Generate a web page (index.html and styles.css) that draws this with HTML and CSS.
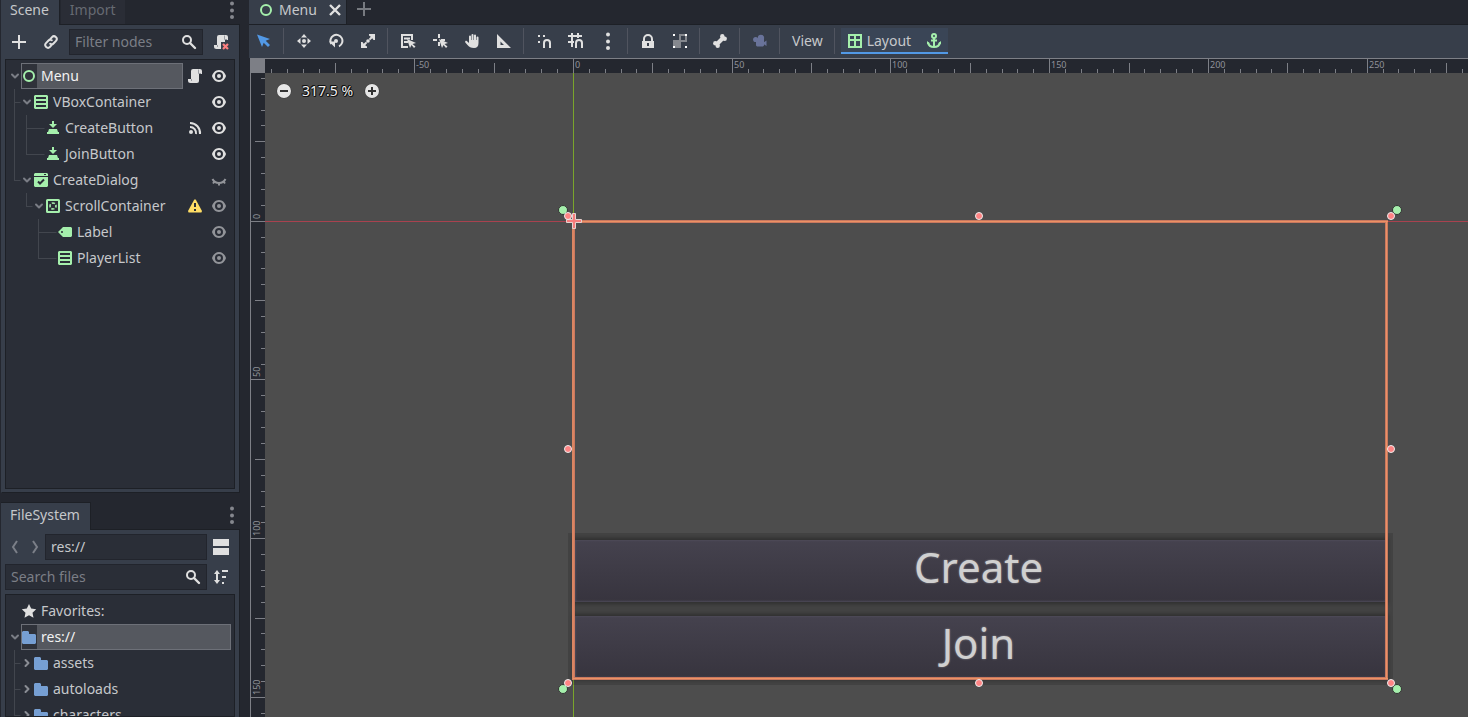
FILE: index.html
```
<!DOCTYPE html>
<html lang="en">
<head>
<meta charset="utf-8">
<title>Menu - Scene Editor</title>
<link rel="stylesheet" href="styles.css">
</head>
<body>
<svg class="sprite" aria-hidden="true">
  <symbol id="i-arrow-down" viewBox="0 0 12 12"><path d="M3 4.5 6 7.5 9 4.5" fill="none" stroke="#7a7d85" stroke-width="2" stroke-linecap="round" stroke-linejoin="round"/></symbol>
  <symbol id="i-arrow-right" viewBox="0 0 12 12"><path d="M4.5 3 7.5 6 4.5 9" fill="none" stroke="#8a8d94" stroke-width="2" stroke-linecap="round" stroke-linejoin="round"/></symbol>
  <symbol id="i-eye" viewBox="0 0 16 16"><path fill-rule="evenodd" d="M8 2C4.4 2 2 4.800 1 8c1 3.200 3.400 6 7 6s6-2.800 7-6c-1-3.200-3.400-6-7-6zm0 2a4 4 0 1 1 0 8 4 4 0 0 1 0-8zm0 2a2 2 0 1 0 0 4 2 2 0 0 0 0-4z"/></symbol>
  <symbol id="i-eye-closed" viewBox="0 0 16 16"><path d="M1.500 7C3 10 5.500 11 8 11s5-1 6.500-4M3.500 9.500 2 11.500M8 11v2.500M12.500 9.500l1.500 2" fill="none" stroke="currentColor" stroke-width="2"/></symbol>
  <symbol id="i-ring" viewBox="0 0 16 16"><circle cx="8" cy="8" r="5" fill="none" stroke="#a5efac" stroke-width="2"/></symbol>
  <symbol id="i-vbox" viewBox="0 0 16 16"><path fill="#a5efac" fill-rule="evenodd" d="M2 1h12l1 1v12l-1 1H2l-1-1V2zM3 3v2h10V3zM3 7v2h10V7zM3 11v2h10v-2z"/></symbol>
  <symbol id="i-button" viewBox="0 0 16 16"><path fill="#a5efac" d="M7 1h2v3h3L8 8 4 4h3zM4 9h8l1 3h1v2H2v-2h1z"/></symbol>
  <symbol id="i-dialog" viewBox="0 0 16 16"><path fill="#a5efac" d="M2 1h12l1 1v2H1V2zM1 5h14v9l-1 1H2l-1-1z"/><path d="M11 2h2v1h-2z" fill="#2a2e37"/><path d="m5 9.500 2 2 4-4" fill="none" stroke="#2a2e37" stroke-width="2"/></symbol>
  <symbol id="i-scroll" viewBox="0 0 16 16"><rect x="2" y="2" width="12" height="12" rx=".5" fill="none" stroke="#a5efac" stroke-width="2"/><circle cx="8" cy="8" r="3" fill="none" stroke="#a5efac" stroke-width="1.600" stroke-dasharray="3.200 1.510" stroke-dashoffset="1.600"/></symbol>
  <symbol id="i-label" viewBox="0 0 16 16"><path fill="#a5efac" fill-rule="evenodd" d="M6 3h8l1 1v8l-1 1H6L1 8zM5 7a1 1 0 1 0 0 2 1 1 0 0 0 0-2z"/></symbol>
  <symbol id="i-script" viewBox="0 0 16 16"><path fill="#e0e0e0" d="M6 1a2 2 0 0 0-2 2v8H1v1.500A2.500 2.500 0 0 0 3.500 15H10a2 2 0 0 0 2-2V6h3V3a2 2 0 0 0-2-2z"/><path d="M11.500 1.500V5.500H14M4.500 11v2" fill="none" stroke="#9a9ca2" stroke-width="1"/></symbol>
  <symbol id="i-signal" viewBox="0 0 16 16"><circle cx="4" cy="12" r="2" fill="#e0e0e0"/><path d="M3 3a10 10 0 0 1 10 11M3 7a6 6 0 0 1 6 7" fill="none" stroke="#e0e0e0" stroke-width="2"/></symbol>
  <symbol id="i-warning" viewBox="0 0 16 16"><path fill="#ffdd65" d="M7.300 1.500h1.400L15 13l-.6 1.500H1.600L1 13z"/><path d="M7 5h2v4H7zM7 11h2v2H7z" fill="#2a2e37"/></symbol>
  <symbol id="i-search" viewBox="0 0 16 16"><circle cx="6" cy="6" r="4" fill="none" stroke="#e0e0e0" stroke-width="2"/><path d="m9 9 5 5" stroke="#e0e0e0" stroke-width="2.400" stroke-linecap="round"/></symbol>
  <symbol id="i-plus" viewBox="0 0 16 16"><path d="M8 1v14M1 8h14" stroke="currentColor" stroke-width="2"/></symbol>
  <symbol id="i-close" viewBox="0 0 16 16"><path d="m3 3 10 10M13 3 3 13" stroke="#e0e0e0" stroke-width="2.400"/></symbol>
  <symbol id="i-link" viewBox="0 0 16 16"><path d="M7 5.500 9 3.200a2.600 2.600 0 0 1 4 3.600L10.500 9.500A2.500 2.500 0 0 1 7.200 9.800M9 10.500 7 12.800a2.600 2.600 0 0 1-4-3.600L5.500 6.500A2.500 2.500 0 0 1 8.800 6.200" fill="none" stroke="#e0e0e0" stroke-width="2" stroke-linecap="round"/></symbol>
  <symbol id="i-script-remove" viewBox="0 0 16 16"><path fill="#e0e0e0" d="M6 1a2 2 0 0 0-2 2v8H1v1.500A2.500 2.500 0 0 0 3.500 15H8V8h4V6h3V3a2 2 0 0 0-2-2z"/><path d="M11.500 1.500V5.500H14M4.500 11v2" fill="none" stroke="#9a9ca2"/><path d="m10 10 5 5M15 10l-5 5" stroke="#fc7f7f" stroke-width="2.200"/></symbol>
  <symbol id="i-dots" viewBox="0 0 16 18"><circle cx="8" cy="2.500" r="2"/><circle cx="8" cy="9.500" r="2"/><circle cx="8" cy="16" r="2"/></symbol>
  <symbol id="i-select" viewBox="0 0 16 16"><path fill="#5299e6" d="m1 1.500 5 12.500 1.700-4.200 4.300 4.200 2-2-4.300-4.200L14 6z"/></symbol>
  <symbol id="i-move" viewBox="0 0 16 16"><path fill="#e0e0e0" d="m8 1 3 3.500H5zM8 15l-3-3.500h6zM1 8l3.500-3v6zM15 8l-3.500 3V5z"/><circle cx="8" cy="8" r="2" fill="#e0e0e0"/></symbol>
  <symbol id="i-rotate" viewBox="0 0 16 16"><path d="M3.300 11A6 6 0 1 1 11 13.300" fill="none" stroke="#e0e0e0" stroke-width="2"/><path d="M1 8.500h6v6z" fill="#e0e0e0"/><circle cx="8" cy="8" r="2" fill="#e0e0e0"/></symbol>
  <symbol id="i-scale" viewBox="0 0 16 16"><path d="M9 1h6v6h-1.500l-1.200-1.800-2.200 2-1.300-1.300 2-2.200L9 2.500zM7 15H1V9h1.500l1.200 1.800 2.200-2 1.300 1.300-2 2.200L7 13.500z" fill="#e0e0e0"/><circle cx="8" cy="8" r="1.800" fill="#e0e0e0"/></symbol>
  <symbol id="i-list" viewBox="0 0 16 16"><path d="M2 1v13h6M2 2h10v5M4 5.500h6M4 9h4" fill="none" stroke="#e0e0e0" stroke-width="2"/><path d="m7 6 3 9 1.500-3 2.500 3 1.500-1.500-3-2.500L16 10z" fill="#e0e0e0"/></symbol>
  <symbol id="i-pivot" viewBox="0 0 16 16"><path d="M7 1v4M1 7h4M9 7h4M7 9v4" stroke="#e0e0e0" stroke-width="2"/><path d="m7 6 3 9 1.500-3 2.500 3 1.500-1.500-3-2.500L16 10z" fill="#e0e0e0"/></symbol>
  <symbol id="i-hand" viewBox="0 0 16 16"><path fill="#e0e0e0" d="M5 10V3.500a1 1 0 0 1 2 0V7h.5V2a1 1 0 0 1 2 0v5h.5V2.500a1 1 0 0 1 2 0V7h.5V4.500a1 1 0 0 1 2 0V10c0 3.500-1.500 5-4.500 5C7 15 5 14 3.500 12L1.300 9.500c-.6-1.300.6-2 1.500-1.500z"/></symbol>
  <symbol id="i-ruler" viewBox="0 0 16 16"><path fill="#e0e0e0" fill-rule="evenodd" d="M1 1v14h14zM4.500 8.500 8 12H4.500z"/></symbol>
  <symbol id="i-snap" viewBox="0 0 16 16"><path fill="#e0e0e0" d="M2 2h2v2H2zM7 2h2v2H7zM2 8h2v2H2zM7 13h2v2H7zM13 13h2v2h-2z"/><path d="M8 13v-3a3 3 0 0 1 6 0v3" fill="none" stroke="#e0e0e0" stroke-width="2"/></symbol>
  <symbol id="i-snap-grid" viewBox="0 0 16 16"><path d="M4 0v14M10 0v5M0 3h14M0 9h6" stroke="#e0e0e0" stroke-width="2"/><path d="M8 15v-5a3 3 0 0 1 6 0v5" fill="none" stroke="#e0e0e0" stroke-width="2"/></symbol>
  <symbol id="i-lock" viewBox="0 0 16 16"><path d="M4 8V6a4 4 0 0 1 8 0v2" fill="none" stroke="#e0e0e0" stroke-width="2"/><path fill="#e0e0e0" fill-rule="evenodd" d="M2 8h12v7H2zM7 10v3h2v-3z"/></symbol>
  <symbol id="i-group" viewBox="0 0 16 16"><path fill="#85888e" fill-rule="evenodd" d="M7 1h8v8H9v6H1V7h6zM9 3v4h4V3z"/><path fill="#fff" d="M1 1h2v2H1zM13 1h2v2h-2zM1 13h2v2H1zM13 13h2v2h-2z"/></symbol>
  <symbol id="i-bone" viewBox="0 0 16 16"><path d="M5 11 11 5" stroke="#e0e0e0" stroke-width="4"/><circle cx="3.300" cy="10.300" r="2.200" fill="#e0e0e0"/><circle cx="5.700" cy="12.700" r="2.200" fill="#e0e0e0"/><circle cx="10.300" cy="3.300" r="2.200" fill="#e0e0e0"/><circle cx="12.700" cy="5.700" r="2.200" fill="#e0e0e0"/></symbol>
  <symbol id="i-camera" viewBox="0 0 16 16"><g fill="#69739a"><circle cx="9" cy="5" r="3.200"/><circle cx="3.700" cy="6.500" r="2.600"/><path d="M4 6h8v6.500l-1 1H5l-1-1zM11.500 9.500 14.500 7.500v5.500l-3-2z"/></g></symbol>
  <symbol id="i-grid" viewBox="0 0 16 16"><path d="M2 2h12v12H2zM2 7h12M8 2v12" fill="none" stroke="#a5efac" stroke-width="2"/></symbol>
  <symbol id="i-anchor" viewBox="0 0 16 16"><circle cx="8" cy="3" r="2" fill="none" stroke="#a5efac" stroke-width="2"/><path d="M8 5v9M5 7.500h6M2 9.500c.5 3 3 4.500 6 4.500s5.500-1.500 6-4.500" fill="none" stroke="#a5efac" stroke-width="2"/><path d="M1 11V8l3 2.500zM15 11V8l-3 2.500z" fill="#a5efac"/></symbol>
  <symbol id="i-minus-disc" viewBox="0 0 16 16"><circle cx="8" cy="8" r="7.500" fill="#3a3a3a"/><circle cx="8" cy="8" r="7" fill="#e6e6e6"/><path d="M4 8h8" stroke="#333" stroke-width="2"/></symbol>
  <symbol id="i-plus-disc" viewBox="0 0 16 16"><circle cx="8" cy="8" r="7.500" fill="#3a3a3a"/><circle cx="8" cy="8" r="7" fill="#e6e6e6"/><path d="M4 8h8M8 4v8" stroke="#333" stroke-width="2"/></symbol>
  <symbol id="i-back" viewBox="0 0 10 16"><path d="M7 2 3 8l4 6" fill="none" stroke="#7b7f88" stroke-width="2"/></symbol>
  <symbol id="i-forward" viewBox="0 0 10 16"><path d="m3 2 4 6-4 6" fill="none" stroke="#7b7f88" stroke-width="2"/></symbol>
  <symbol id="i-split" viewBox="0 0 16 16"><path fill="#e0e0e0" d="M0 0h16v7H0zM0 9h16v7H0z"/></symbol>
  <symbol id="i-sort" viewBox="0 0 16 16"><path fill="#e0e0e0" d="m4 1 3 4H5v6h2l-3 4-3-4h2V5H1zM9 1h6v2H9zM9 7h4v2H9zM9 13h2v2H9z"/></symbol>
  <symbol id="i-star" viewBox="0 0 16 16"><path fill="#e0e0e0" d="m8 1 2.200 4.600 5 .6-3.700 3.500 1 5L8 12.200 3.500 14.700l1-5L.800 6.200l5-.6z"/></symbol>
  <symbol id="i-folder" viewBox="0 0 16 16"><path fill="#769fd3" d="M2 2h5l1 1v2h6l1 1v8l-1 1H2l-1-1V3z"/></symbol>
</svg>

<div class="editor">
  <aside class="docks">
    <section class="dock dock-scene">
      <div class="tabs">
        <button class="tab tab-active">Scene</button>
        <button class="tab tab-idle">Import</button>
        <button class="tab-menu" aria-label="Dock options"><svg class="icon-dots"><use href="#i-dots"/></svg></button>
      </div>
      <div class="panel">
        <div class="tools">
          <button class="tool" aria-label="Add node"><svg class="icon"><use href="#i-plus"/></svg></button>
          <button class="tool" aria-label="Instance scene"><svg class="icon"><use href="#i-link"/></svg></button>
          <label class="field"><input class="field-input" type="text" placeholder="Filter nodes" aria-label="Filter nodes"><svg class="icon"><use href="#i-search"/></svg></label>
          <button class="tool" aria-label="Detach script"><svg class="icon"><use href="#i-script-remove"/></svg></button>
        </div>
        <div class="tree">
          <svg class="guides"><path d="M8.500 29v92M8.500 42.500h6M8.500 120.500h6M20.500 55v40M20.500 68.500h18M20.500 94.500h18M20.500 133v14M20.500 146.500h6M32.500 159v40M32.500 172.500h18M32.500 198.500h18"/></svg>
          <div class="row"><svg class="arrow"><use href="#i-arrow-down"/></svg><span class="cell cell-selected"><svg class="node"><use href="#i-ring"/></svg>Menu</span><button class="mark" aria-label="Open script"><svg class="icon"><use href="#i-script"/></svg></button><button class="mark" aria-label="Toggle visibility"><svg class="icon"><use href="#i-eye"/></svg></button></div>
          <div class="row level-1"><svg class="arrow"><use href="#i-arrow-down"/></svg><span class="cell"><svg class="node"><use href="#i-vbox"/></svg>VBoxContainer</span><button class="mark" aria-label="Toggle visibility"><svg class="icon"><use href="#i-eye"/></svg></button></div>
          <div class="row level-2"><span class="arrow"></span><span class="cell"><svg class="node"><use href="#i-button"/></svg>CreateButton</span><button class="mark" aria-label="Signals"><svg class="icon"><use href="#i-signal"/></svg></button><button class="mark" aria-label="Toggle visibility"><svg class="icon"><use href="#i-eye"/></svg></button></div>
          <div class="row level-2"><span class="arrow"></span><span class="cell"><svg class="node"><use href="#i-button"/></svg>JoinButton</span><button class="mark" aria-label="Toggle visibility"><svg class="icon"><use href="#i-eye"/></svg></button></div>
          <div class="row level-1"><svg class="arrow"><use href="#i-arrow-down"/></svg><span class="cell"><svg class="node"><use href="#i-dialog"/></svg>CreateDialog</span><button class="mark mark-dim" aria-label="Toggle visibility"><svg class="icon"><use href="#i-eye-closed"/></svg></button></div>
          <div class="row level-2"><svg class="arrow"><use href="#i-arrow-down"/></svg><span class="cell"><svg class="node"><use href="#i-scroll"/></svg>ScrollContainer</span><button class="mark" aria-label="Warning"><svg class="icon"><use href="#i-warning"/></svg></button><button class="mark mark-dim" aria-label="Toggle visibility"><svg class="icon"><use href="#i-eye"/></svg></button></div>
          <div class="row level-3"><span class="arrow"></span><span class="cell"><svg class="node"><use href="#i-label"/></svg>Label</span><button class="mark mark-dim" aria-label="Toggle visibility"><svg class="icon"><use href="#i-eye"/></svg></button></div>
          <div class="row level-3"><span class="arrow"></span><span class="cell"><svg class="node"><use href="#i-vbox"/></svg>PlayerList</span><button class="mark mark-dim" aria-label="Toggle visibility"><svg class="icon"><use href="#i-eye"/></svg></button></div>
        </div>
      </div>
    </section>

    <section class="dock dock-files">
      <div class="tabs">
        <button class="tab tab-active">FileSystem</button>
        <button class="tab-menu" aria-label="Dock options"><svg class="icon-dots"><use href="#i-dots"/></svg></button>
      </div>
      <div class="panel">
        <div class="file-tools">
          <div class="path">
            <button class="step" aria-label="Back"><svg class="icon-step"><use href="#i-back"/></svg></button>
            <button class="step" aria-label="Forward"><svg class="icon-step"><use href="#i-forward"/></svg></button>
            <label class="field"><input class="field-input" type="text" value="res://" aria-label="Path"></label>
          </div>
          <button class="tool" aria-label="Split mode"><svg class="icon"><use href="#i-split"/></svg></button>
          <label class="field"><input class="field-input" type="text" placeholder="Search files" aria-label="Search files"><svg class="icon"><use href="#i-search"/></svg></label>
          <button class="tool" aria-label="Sort files"><svg class="icon"><use href="#i-sort"/></svg></button>
        </div>
        <div class="tree">
          <svg class="guides"><path d="M8.500 55v120M8.500 68.500h6M8.500 94.500h6M8.500 120.500h6"/></svg>
          <div class="row"><span class="arrow"></span><span class="cell"><svg class="node"><use href="#i-star"/></svg>Favorites:</span></div>
          <div class="row"><svg class="arrow"><use href="#i-arrow-down"/></svg><span class="cell cell-selected"><svg class="node"><use href="#i-folder"/></svg>res://</span></div>
          <div class="row level-1"><svg class="arrow"><use href="#i-arrow-right"/></svg><span class="cell"><svg class="node"><use href="#i-folder"/></svg>assets</span></div>
          <div class="row level-1"><svg class="arrow"><use href="#i-arrow-right"/></svg><span class="cell"><svg class="node"><use href="#i-folder"/></svg>autoloads</span></div>
          <div class="row level-1"><svg class="arrow"><use href="#i-arrow-right"/></svg><span class="cell"><svg class="node"><use href="#i-folder"/></svg>characters</span></div>
        </div>
      </div>
    </section>
  </aside>

  <main class="main">
    <div class="scene-tabs">
      <div class="scene-tab"><svg class="icon"><use href="#i-ring"/></svg><span class="scene-name">Menu</span><button class="plain" aria-label="Close scene"><svg class="icon"><use href="#i-close"/></svg></button></div>
      <button class="plain add-scene" aria-label="Add scene"><svg class="icon"><use href="#i-plus"/></svg></button>
    </div>
    <div class="toolbar">
      <button class="tool" aria-label="Select"><svg class="icon"><use href="#i-select"/></svg></button>
      <span class="separator"></span>
      <button class="tool" aria-label="Move"><svg class="icon"><use href="#i-move"/></svg></button>
      <button class="tool" aria-label="Rotate"><svg class="icon"><use href="#i-rotate"/></svg></button>
      <button class="tool" aria-label="Scale"><svg class="icon"><use href="#i-scale"/></svg></button>
      <span class="separator"></span>
      <button class="tool" aria-label="List select"><svg class="icon"><use href="#i-list"/></svg></button>
      <button class="tool" aria-label="Pivot"><svg class="icon"><use href="#i-pivot"/></svg></button>
      <button class="tool" aria-label="Pan"><svg class="icon"><use href="#i-hand"/></svg></button>
      <button class="tool" aria-label="Ruler"><svg class="icon"><use href="#i-ruler"/></svg></button>
      <span class="separator"></span>
      <button class="tool" aria-label="Smart snap"><svg class="icon"><use href="#i-snap"/></svg></button>
      <button class="tool" aria-label="Grid snap"><svg class="icon"><use href="#i-snap-grid"/></svg></button>
      <button class="tool" aria-label="Snap options"><svg class="icon-dots"><use href="#i-dots"/></svg></button>
      <span class="separator"></span>
      <button class="tool" aria-label="Lock"><svg class="icon"><use href="#i-lock"/></svg></button>
      <button class="tool" aria-label="Group"><svg class="icon"><use href="#i-group"/></svg></button>
      <span class="separator"></span>
      <button class="tool" aria-label="Skeleton"><svg class="icon"><use href="#i-bone"/></svg></button>
      <span class="separator"></span>
      <button class="tool" aria-label="Camera override"><svg class="icon"><use href="#i-camera"/></svg></button>
      <span class="separator"></span>
      <button class="text-tool">View</button>
      <span class="separator"></span>
      <div class="layout-group">
        <button class="text-tool"><svg class="icon"><use href="#i-grid"/></svg>Layout</button>
        <button class="tool" aria-label="Anchors"><svg class="icon"><use href="#i-anchor"/></svg></button>
      </div>
    </div>
    <div class="canvas">
      <div class="corner"></div>
      <svg class="ruler ruler-x"></svg>
      <svg class="ruler ruler-y"></svg>
      <div class="viewport">
        <svg class="overlay"><path d="M308.500 0v2000" stroke="#7aa52b"/><path d="M0 148.500h4000" stroke="#a8424f"/></svg>
        <div class="frame">
          <button class="game-button"><span class="game-text">Create</span></button>
          <button class="game-button"><span class="game-text">Join</span></button>
        </div>
        <svg class="overlay">
          <g fill="none"><rect x="308.500" y="148.500" width="813" height="457" stroke="#c97860" stroke-width="3"/><path d="M308 607V148.500h815M1121.500 148v458M308 605.500h815" stroke="#ec9264"/></g>
          <path d="M307.500 140.500h3v6h6v3h-6v6h-3v-6h-6v-3h6z" fill="#f77c7c" stroke="#e6d2cf"/>
          <g class="anchors"><circle cx="298" cy="137" r="4.500"/><circle cx="1132" cy="137" r="4.500"/><circle cx="298" cy="616" r="4.500"/><circle cx="1132" cy="616" r="4.500"/></g>
          <g class="handles"><circle cx="303" cy="143" r="3.500"/><circle cx="714" cy="143" r="3.500"/><circle cx="1126" cy="143" r="3.500"/><circle cx="303" cy="376" r="3.500"/><circle cx="1126" cy="376" r="3.500"/><circle cx="303" cy="610" r="3.500"/><circle cx="714" cy="610" r="3.500"/><circle cx="1126" cy="610" r="3.500"/></g>
        </svg>
        <div class="zoom">
          <button class="plain" aria-label="Zoom out"><svg class="icon"><use href="#i-minus-disc"/></svg></button>
          <span class="zoom-value">317.5 %</span>
          <button class="plain" aria-label="Zoom in"><svg class="icon"><use href="#i-plus-disc"/></svg></button>
        </div>
      </div>
    </div>
  </main>
</div>
<script src="rulers.js"></script>
</body>
</html>
```
FILE: styles.css
```
* { box-sizing: border-box; }
body { margin: 0; overflow: hidden; background: #24272f; color: #c6c8cb; font: 14px/20px "Noto Sans", sans-serif; }
button { margin: 0; padding: 0; border: 0; background: none; color: inherit; font: inherit; }
svg { display: block; flex: none; }
.sprite { position: absolute; width: 0; height: 0; }
.icon { width: 16px; height: 16px; }
.icon-dots { width: 16px; height: 18px; fill: #e0e0e0; }
.icon-step { width: 10px; height: 16px; }
.editor { display: flex; height: 100vh; }

.docks { display: flex; flex-direction: column; gap: 9px; width: 249px; flex: none; padding-left: 1px; }
.dock { display: flex; flex-direction: column; width: 239px; min-height: 0; }
.dock-scene { flex: 1; }
.dock-files { height: 30vh; }
.tabs { display: flex; gap: 1px; height: 25px; margin-bottom: -1px; flex: none; }
.dock-files .tabs { height: 28px; }
.tab { height: 100%; padding: 0 9px 5px; border-right: 1px solid #1d2026; }
.tab-active { position: relative; z-index: 1; padding-right: 10px; background: #373e4a; }
.tab-idle { height: 24px; padding-bottom: 4px; border: 0; background: #2a2d36; color: #666a72; }
.dock-files .tab { padding-bottom: 2px; border-top: 1px solid #1d2026; }
.tab-menu { margin-left: auto; padding-bottom: 5px; }
.dock-files .tab-menu { padding-bottom: 2px; }
.tab-menu .icon-dots { fill: #85878e; }
.panel { display: flex; flex-direction: column; flex: 1; min-height: 0; gap: 4px; padding: 4px 4px 3px 3px; border: 1px solid #1d2026; border-left-color: #373e4a; background: #373e4a; }
.dock-files .panel { padding-bottom: 0; border-bottom: 0; }
.tools { display: flex; gap: 4px; flex: none; align-items: center; }
.tool { display: grid; place-items: center; width: 28px; height: 26px; color: #e0e0e0; }
.field { display: flex; flex: 1; min-width: 0; align-items: center; height: 26px; padding: 0 5px; border: 1px solid #22252d; background: #2a2e37; }
.field-input { flex: 1; width: 0; min-width: 0; height: 24px; padding: 0 0 1px; border: 0; outline: 0; background: none; color: inherit; font: inherit; }
.field-input::placeholder { color: #7b7e86; opacity: 1; }
.file-tools { display: grid; grid-template-columns: 1fr 28px; row-gap: 4px; flex: none; }
.path { display: flex; }
.step { display: grid; place-items: center; width: 20px; }

.tree { position: relative; flex: 1; min-height: 0; overflow: hidden; padding: 3px; border: 1px solid #1d2026; background: #2a2e37; }
.guides { position: absolute; top: 0; left: 0; width: 100%; height: 300px; fill: none; stroke: #42464e; }
.row { position: relative; display: flex; align-items: center; height: 26px; }
.level-1 { padding-left: 12px; }
.level-2 { padding-left: 24px; }
.level-3 { padding-left: 36px; }
.arrow { width: 12px; height: 12px; flex: none; }
.cell { display: flex; flex: 1; align-items: center; gap: 4px; height: 26px; white-space: nowrap; }
.cell-selected { background: linear-gradient(90deg, #2f323a 16px, #55585f 16px); color: #f2f2f2; box-shadow: inset 0 0 0 1px #6d7078; }
.node { width: 16px; height: 16px; }
.mark { display: grid; place-items: center; width: 24px; height: 26px; padding-bottom: 1px; color: #e0e0e0; fill: #e0e0e0; }
.mark-dim { color: #929499; fill: #929499; }

.main { display: flex; flex: 1; flex-direction: column; min-width: 0; }
.scene-tabs { display: flex; height: 24px; flex: none; }
.scene-tab { display: flex; align-items: center; padding: 0 3px 4px 9px; border-right: 1px solid #1d2026; background: #373e4a; }
.scene-name { padding: 0 10px 0 5px; }
.plain { display: grid; place-items: center; }
.add-scene { padding: 0 9px 6px; color: #777a80; }
.toolbar { display: flex; flex: none; gap: 4px; height: 34px; padding: 3px 1px 4px; border-top: 1px solid #1d2026; background: #373e4a; }
.separator { width: 4px; height: 26px; background: linear-gradient(90deg, transparent 1px, #50545f 1px, #50545f 2px, transparent 2px); }
.text-tool { display: flex; align-items: center; gap: 4px; height: 26px; padding: 0 6px; }
.layout-group { display: flex; gap: 3px; height: 26px; background: linear-gradient(#3a4556 24px, #5299e6 24px); }

.canvas { display: grid; flex: 1; grid-template: 15px 1fr / 15px 1fr; min-height: 0; margin-left: 1px; }
.corner { background: #7d7f86; }
.ruler { width: 100%; height: 100%; overflow: hidden; background: #24272f; }
.ruler path { fill: none; stroke: #7d7f86; }
.ruler text { fill: #909299; font-size: 9px; }
.viewport { position: relative; overflow: hidden; background: #4d4d4d; }
.overlay { position: absolute; inset: 0; width: 100%; height: 100%; pointer-events: none; }
.frame { position: absolute; left: 310px; top: 150px; width: 811px; height: 455px; display: flex; flex-direction: column; justify-content: flex-end; gap: 14px; }
.game-button { height: 62px; padding: 0 4px 9px 0; background: linear-gradient(#45424e, #37343e); color: #d0d0d0; font-size: 42px; line-height: 53px; box-shadow: inset 0 0 2px 1px #4e4b59, 0 0 4px 2px rgba(0, 0, 0, .3), 0 0 0 7px rgba(0, 0, 0, .12); }
.game-text { text-shadow: 0 0 2px rgba(208, 208, 208, .6); }
.anchors { fill: #a5efac; stroke: #333; }
.handles { fill: #ff8484; stroke: #eee; }
.zoom { position: absolute; left: 11px; top: 8px; display: flex; align-items: center; gap: 10px; }
.zoom-value { padding: 0 1px 0 0; color: #f0f0f0; text-shadow: 1px 0 #111, -1px 0 #111, 0 1px #111, 0 -1px #111, 1px 1px #111, -1px -1px #111; }
```
FILE: rulers.js
```
// Draws both canvas rulers: a tick every 5 units, a longer one every 25, a labelled one every 50.
const STEP = 15.875;
const NS = "http://www.w3.org/2000/svg";

function drawRuler(svg, origin, length, vertical) {
  let ticks = vertical ? "M.5 0v" + length : "M0 .5h" + length;
  for (let i = -Math.floor(origin / STEP); origin + i * STEP < length + 40; i++) {
    const p = Math.floor(origin + i * STEP);
    const size = i % 10 === 0 ? 15 : i % 5 === 0 ? 10 : 4;
    ticks += vertical ? `M${15 - size} ${p}.5H15` : `M${p}.5 ${15 - size}V15`;
    if (i % 10 === 0) {
      const text = document.createElementNS(NS, "text");
      text.textContent = i * 5;
      text.setAttribute("transform", vertical ? `translate(10 ${p - 2}) rotate(-90)` : `translate(${p + 2} 10)`);
      svg.append(text);
    }
  }
  const path = document.createElementNS(NS, "path");
  path.setAttribute("d", ticks);
  svg.append(path);
}

const rulerX = document.querySelector(".ruler-x");
const rulerY = document.querySelector(".ruler-y");
drawRuler(rulerX, 308.4, rulerX.clientWidth, false);
drawRuler(rulerY, 148.2, rulerY.clientHeight, true);
```
